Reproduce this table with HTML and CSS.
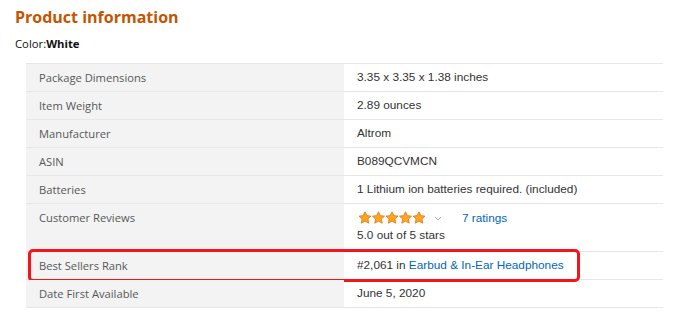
FILE: index.html
```html
<!DOCTYPE html>
<html>
<head>
<meta charset="utf-8">
<link rel="stylesheet" href="styles.css">
</head>
<body>
<div class="page">
  <h2 class="title">Product information</h2>
  <div class="color">Color:<b>White</b></div>
  <div class="table">
    <div class="row"><div class="label">Package Dimensions</div><div class="value">3.35 x 3.35 x 1.38 inches</div></div>
    <div class="row"><div class="label">Item Weight</div><div class="value">2.89 ounces</div></div>
    <div class="row"><div class="label">Manufacturer</div><div class="value">Altrom</div></div>
    <div class="row"><div class="label">ASIN</div><div class="value">B089QCVMCN</div></div>
    <div class="row"><div class="label">Batteries</div><div class="value">1 Lithium ion batteries required. (included)</div></div>
    <div class="row tall"><div class="label">Customer Reviews</div>
      <div class="value">
        <div class="stars-line">
          <span class="stars">
            <svg width="68" height="14" viewBox="0 0 68 14">
              <defs>
                <path id="st" d="M7 0.8 L8.85 4.6 L13 5.15 L9.95 8 L10.75 12.2 L7 10.15 L3.25 12.2 L4.05 8 L1 5.15 L5.15 4.6 Z"/>
              </defs>
              <use href="#st" x="0" fill="#ffa41c" stroke="#de7921" stroke-width="0.8"/>
              <use href="#st" x="13.5" fill="#ffa41c" stroke="#de7921" stroke-width="0.8"/>
              <use href="#st" x="27" fill="#ffa41c" stroke="#de7921" stroke-width="0.8"/>
              <use href="#st" x="40.5" fill="#ffa41c" stroke="#de7921" stroke-width="0.8"/>
              <use href="#st" x="54" fill="#ffa41c" stroke="#de7921" stroke-width="0.8"/>
            </svg>
          </span>
          <svg class="chev" width="8" height="5" viewBox="0 0 8 5"><path d="M1 1 L4 4 L7 1" fill="none" stroke="#aaa" stroke-width="1"/></svg>
          <a class="link ratings">7 ratings</a>
        </div>
        <div class="outof">5.0 out of 5 stars</div>
      </div>
    </div>
    <div class="row rank"><div class="label">Best Sellers Rank</div><div class="value">#2,061 in <a class="link">Earbud &amp; In-Ear Headphones</a></div>
      <div class="highlight"></div>
    </div>
    <div class="row"><div class="label">Date First Available</div><div class="value">June 5, 2020</div></div>
  </div>
</div>
</body>
</html>
```
FILE: styles.css
```css
html, body { margin: 0; padding: 0; background: #fff; }
.page { padding: 7px 0 0 15px; }
.title {
  margin: 0;
  font-family: "Open Sans", "Liberation Sans", sans-serif;
  font-weight: 700;
  font-size: 16px;
  line-height: 20px;
  color: #c45500;
}
.color {
  margin-top: 9px;
  font-family: "Open Sans", "Liberation Sans", sans-serif;
  font-size: 11.3px;
  line-height: 16px;
  color: #111;
}
.color b { font-weight: 700; }
.table {
  margin: 11px 0 0 11px;
  width: 637px;
  border-top: 1px solid #e7e7e7;
}
.row {
  position: relative;
  display: flex;
  border-bottom: 1px solid #e7e7e7;
}
.label {
  width: 318px;
  box-sizing: border-box;
  padding: 6px 13px;
  background: #f3f3f3;
  font-family: "Open Sans", "Liberation Sans", sans-serif;
  font-size: 11.2px;
  line-height: 15px;
  color: #565959;
}
.row .label, .row .value { min-height: 27px; }
.value {
  flex: 1;
  box-sizing: border-box;
  padding: 6px 13px;
  font-family: "Liberation Sans", Arial, sans-serif;
  font-size: 11.8px;
  line-height: 15px;
  color: #333;
}
.link { color: #0066c0; text-decoration: none; }
.stars-line { display: flex; align-items: center; height: 16px; }
.stars { display: flex; width: 72px; margin-left: 1px; }
.chev { margin-left: 4px; }
.ratings { margin-left: 20px; }
.outof { margin-top: 1px; line-height: 16px; }
.tall .value { padding-bottom: 8px; }
.highlight {
  position: absolute;
  left: 2px;
  top: -3px;
  width: 552px;
  height: 33px;
  box-sizing: border-box;
  border: 3px solid #f5141a;
  border-radius: 5px;
}
```
